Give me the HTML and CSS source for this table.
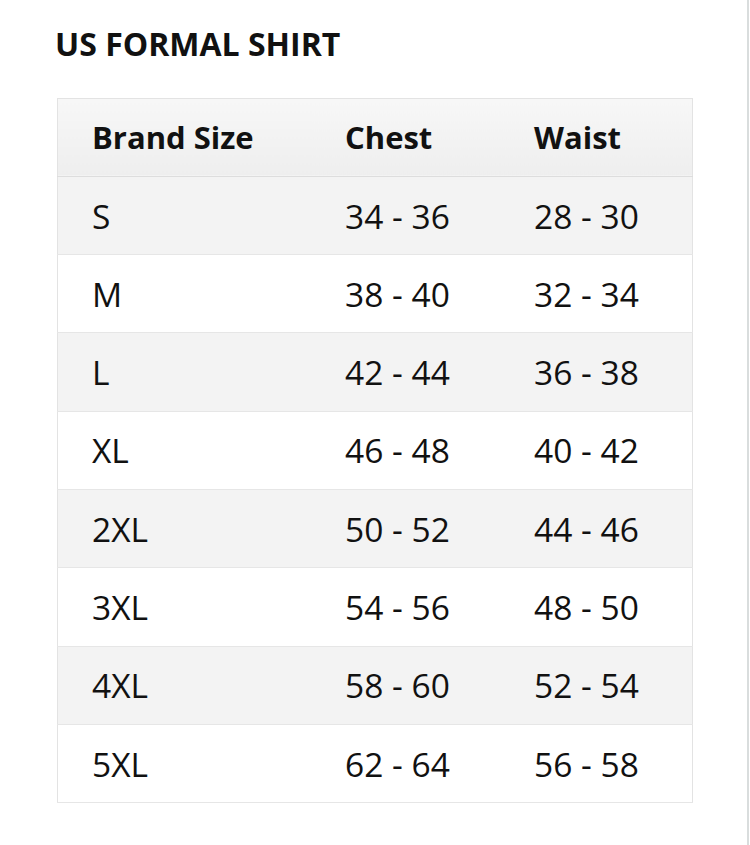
FILE: index.html
```html
<!DOCTYPE html>
<html lang="en">
<head>
<meta charset="utf-8">
<title>US Formal Shirt Size Chart</title>
<link rel="stylesheet" href="styles.css">
</head>
<body>
<div class="page">
  <main class="content">
    <h1 class="title">US FORMAL SHIRT</h1>
    <table class="size-table">
      <thead>
        <tr>
          <th class="col-size">Brand Size</th>
          <th class="col-chest">Chest</th>
          <th class="col-waist">Waist</th>
        </tr>
      </thead>
      <tbody>
        <tr><td>S</td><td>34 - 36</td><td>28 - 30</td></tr>
        <tr><td>M</td><td>38 - 40</td><td>32 - 34</td></tr>
        <tr><td>L</td><td>42 - 44</td><td>36 - 38</td></tr>
        <tr><td>XL</td><td>46 - 48</td><td>40 - 42</td></tr>
        <tr><td>2XL</td><td>50 - 52</td><td>44 - 46</td></tr>
        <tr><td>3XL</td><td>54 - 56</td><td>48 - 50</td></tr>
        <tr><td>4XL</td><td>58 - 60</td><td>52 - 54</td></tr>
        <tr><td>5XL</td><td>62 - 64</td><td>56 - 58</td></tr>
      </tbody>
    </table>
  </main>
  <div class="edge"></div>
</div>
</body>
</html>
```

FILE: styles.css
```css
html, body {
  margin: 0;
  padding: 0;
  background: #ffffff;
}

body {
  font-family: "Open Sans", "Noto Sans", "DejaVu Sans", sans-serif;
  color: #111111;
}

.page {
  display: flex;
  width: 750px;
  height: 845px;
  overflow: hidden;
}

.content {
  flex: 1;
  padding: 22px 0 0 55px;
}

.edge {
  width: 2px;
  margin-right: 1px;
  background: #d9dddd;
}

.title {
  margin: 0 0 32px 0;
  font-size: 32px;
  font-weight: 700;
  line-height: 1.362;
  color: #111111;
}

.size-table {
  margin-left: 2px;
  width: 636px;
  border-collapse: collapse;
  border: 1px solid #e3e3e3;
  table-layout: fixed;
}

.col-size { width: 219px; }
.col-chest { width: 155px; }

.size-table th,
.size-table td {
  padding: 0 0 0 34px;
  text-align: left;
  vertical-align: middle;
  height: 77.3px;
  border-bottom: 1px solid #e6e6e6;
  white-space: nowrap;
}

.size-table th {
  font-size: 31px;
  font-weight: 700;
  color: #111111;
  background: linear-gradient(#f7f7f7, #eeeeee);
  border-bottom: 1px solid #dddddd;
}

.size-table td {
  font-size: 33.5px;
  font-weight: 400;
  color: #111111;
}

.size-table tbody tr:nth-child(odd) td {
  background: #f3f3f3;
}

.size-table tbody tr:nth-child(even) td {
  background: #ffffff;
}
```
